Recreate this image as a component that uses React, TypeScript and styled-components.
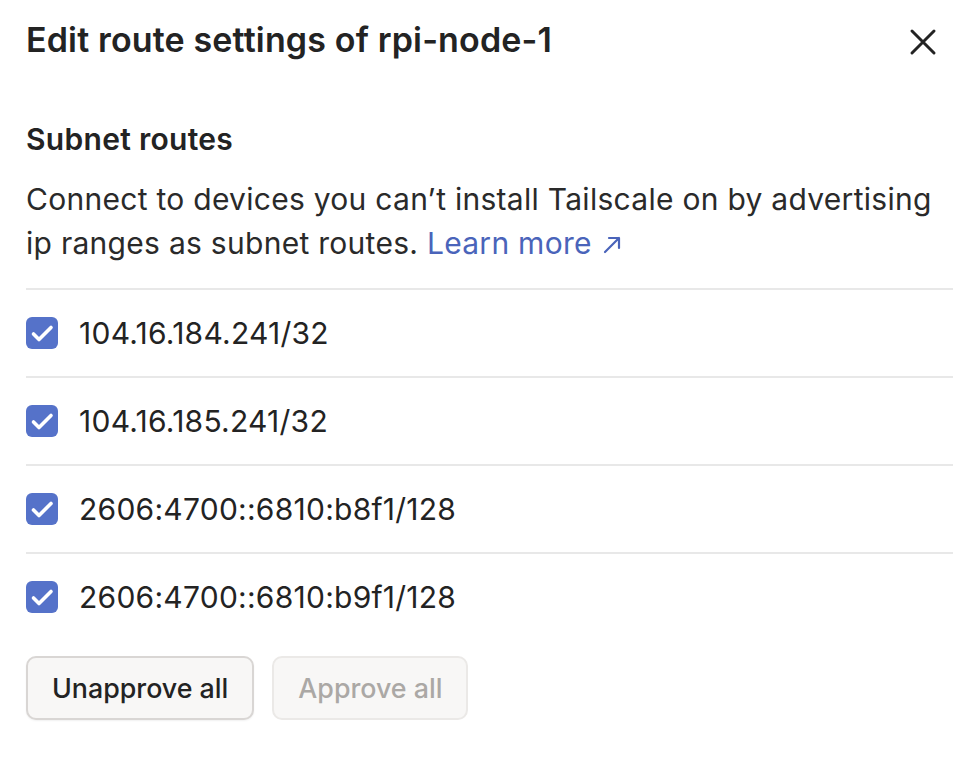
import React, { useState } from 'react';
import styled, { createGlobalStyle } from 'styled-components';

const GlobalStyle = createGlobalStyle`
  html, body {
    margin: 0;
    padding: 0;
    background: #fff;
  }
  body {
    font-family: Inter, "Noto Sans", "Liberation Sans", sans-serif;
    color: #232323;
    -webkit-font-smoothing: antialiased;
  }
`;

const Dialog = styled.div`
  width: 962px;
  min-height: 778px;
  box-sizing: border-box;
  padding: 18px 9px 0 26px;
  display: flex;
  flex-direction: column;
`;

const Header = styled.div`
  display: flex;
  align-items: center;
  justify-content: space-between;
`;

const Title = styled.h1`
  margin: 0;
  font-size: 34px;
  line-height: 40px;
  font-weight: 600;
  letter-spacing: 0.15px;
  color: #232323;
`;

const CloseButton = styled.button`
  width: 40px;
  height: 40px;
  margin-right: 10px;
  margin-top: 4px;
  padding: 0;
  border: none;
  background: none;
  display: flex;
  align-items: center;
  justify-content: center;
  color: #232323;
  cursor: pointer;
`;

const SectionTitle = styled.h2`
  margin: 59px 0 0;
  font-size: 30px;
  line-height: 36px;
  font-weight: 600;
  letter-spacing: 0.3px;
  color: #232323;
`;

const Description = styled.p`
  margin: 20px 0 0;
  font-size: 30px;
  line-height: 44px;
  font-weight: 400;
  letter-spacing: 0.28px;
  color: #2a2a2a;
`;

const LearnMore = styled.a`
  color: #4a64ba;
  text-decoration: none;
  white-space: nowrap;

  svg {
    margin-left: 10px;
    vertical-align: -1px;
  }
`;

const RouteList = styled.ul`
  list-style: none;
  margin: 23px 0 0;
  padding: 0;
`;

const RouteRow = styled.li`
  height: 88px;
  box-sizing: border-box;
  border-top: 2px solid #e8e8e8;
  display: flex;
  align-items: center;
  gap: 21px;
  font-size: 30px;
  letter-spacing: 0.25px;
  color: #232323;
`;

const Check = styled.span<{ $checked: boolean }>`
  width: 32px;
  height: 32px;
  border-radius: 6px;
  box-sizing: border-box;
  background: ${(p) => (p.$checked ? '#5572c9' : '#fff')};
  border: ${(p) => (p.$checked ? 'none' : '2px solid #c7c5c3')};
  display: flex;
  align-items: center;
  justify-content: center;
  flex-shrink: 0;
  cursor: pointer;
`;

const Actions = styled.div`
  display: flex;
  gap: 18px;
  margin-top: 16px;
`;

const ActionButton = styled.button`
  height: 64px;
  padding: 0 24px;
  border-radius: 10px;
  border: 2px solid #d9d6d4;
  background: #f8f7f6;
  font-family: inherit;
  font-size: 26.8px;
  font-weight: 500;
  color: #232323;
  box-shadow: 0 1px 2px rgba(0, 0, 0, 0.06);
  cursor: pointer;

  &:disabled {
    border-color: #ebe9e7;
    color: #aba8a5;
    box-shadow: none;
    cursor: default;
  }
`;

const routes = [
  '104.16.184.241/32',
  '104.16.185.241/32',
  '2606:4700::6810:b8f1/128',
  '2606:4700::6810:b9f1/128',
];

export default function App() {
  const [checked, setChecked] = useState<boolean[]>(routes.map(() => true));

  const toggle = (i: number) =>
    setChecked((prev) => prev.map((c, j) => (j === i ? !c : c)));

  const allChecked = checked.every(Boolean);
  const noneChecked = checked.every((c) => !c);

  return (
    <>
      <GlobalStyle />
      <Dialog>
        <Header>
          <Title>Edit route settings of rpi-node-1</Title>
          <CloseButton aria-label="Close">
            <svg width="28" height="28" viewBox="0 0 28 28" fill="none" stroke="currentColor" strokeWidth="3" strokeLinecap="round">
              <path d="M3 3l22 22M25 3L3 25" />
            </svg>
          </CloseButton>
        </Header>

        <SectionTitle>Subnet routes</SectionTitle>
        <Description>
          Connect to devices you can’t install Tailscale on by advertising ip ranges as subnet routes.{' '}
          <LearnMore href="#">
            Learn more
            <svg width="20" height="20" viewBox="0 0 20 20" fill="none" stroke="currentColor" strokeWidth="2.2" strokeLinecap="round" strokeLinejoin="round">
              <path d="M3 17L17 3M7 3h10v10" />
            </svg>
          </LearnMore>
        </Description>

        <RouteList>
          {routes.map((r, i) => (
            <RouteRow key={r}>
              <Check $checked={checked[i]} onClick={() => toggle(i)}>
                {checked[i] && (
                  <svg width="32" height="32" viewBox="0 0 32 32" fill="none" stroke="#fff" strokeWidth="3.6" strokeLinecap="round" strokeLinejoin="round">
                    <path d="M7.5 17l5.5 5.5L25 10.5" />
                  </svg>
                )}
              </Check>
              {r}
            </RouteRow>
          ))}
        </RouteList>

        <Actions>
          <ActionButton disabled={noneChecked} onClick={() => setChecked(routes.map(() => false))}>
            Unapprove all
          </ActionButton>
          <ActionButton disabled={allChecked} onClick={() => setChecked(routes.map(() => true))}>
            Approve all
          </ActionButton>
        </Actions>
      </Dialog>
    </>
  );
}
